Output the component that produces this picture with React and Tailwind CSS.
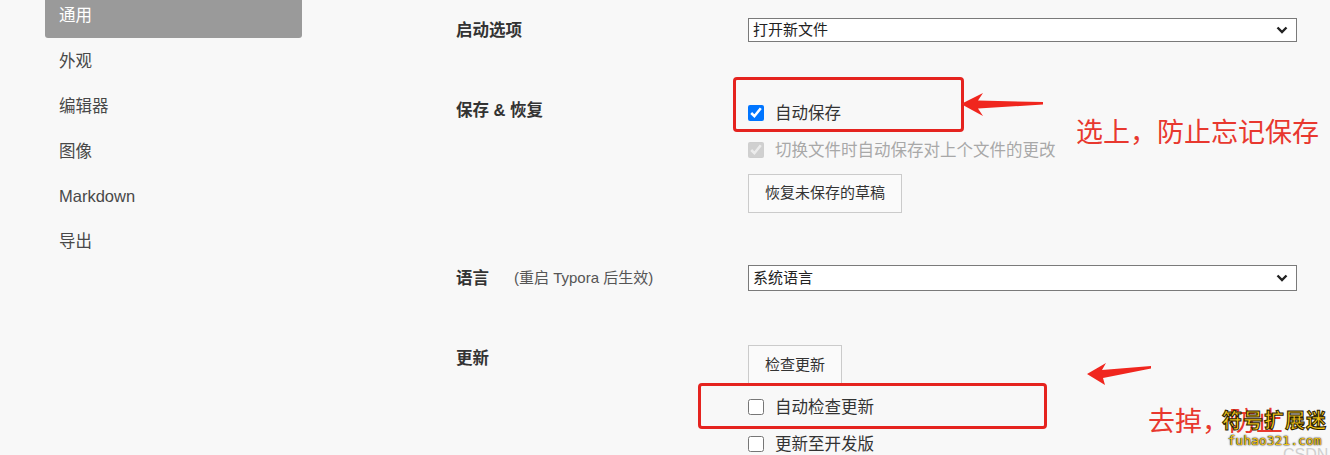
import React from "react";

const navItems = ["外观", "编辑器", "图像", "Markdown", "导出"];

function Chevron() {
  return (
    <svg width="12" height="8" viewBox="0 0 12 8" className="absolute right-[8px] top-1/2 -translate-y-1/2">
      <polyline points="1.5,1.5 6,6 10.5,1.5" fill="none" stroke="#222" strokeWidth="2.4" />
    </svg>
  );
}

function Select({ value, h }) {
  return (
    <div className={`relative w-[549px] ${h} bg-white border border-[#7a7a7a] flex items-center pl-[4px] text-[15px] text-[#222]`}>
      {value}
      <Chevron />
    </div>
  );
}

function Check({ checked, disabled, children }) {
  return (
    <label className={`flex items-center h-[22px] gap-[11px] text-[16.5px] leading-[22px] ${disabled ? "text-[#a8a8a8]" : "text-[#333]"}`}>
      <input
        type="checkbox"
        defaultChecked={checked}
        disabled={disabled}
        className="w-4 h-4 m-0 accent-[#0075ff]"
      />
      {children}
    </label>
  );
}

function Button({ children, h }) {
  return (
    <button className={`${h} px-[16px] bg-[#fafafa] border border-[#cbcbcb] text-[15px] text-[#333] self-start`}>
      {children}
    </button>
  );
}

export default function App() {
  return (
    <div className="relative w-[1330px] h-[455px] overflow-hidden bg-[#f8f8f8] flex font-['Liberation_Sans','Noto_Sans_CJK_SC',sans-serif]">
      {/* sidebar */}
      <div className="w-[302px] pl-[45px] shrink-0">
        <div className="w-[257px] h-[38px] bg-[#9a9a9a] rounded-b-[3px] pl-[14px] pt-[4px] text-white text-[16.5px] leading-[22px]">
          通用
        </div>
        <div className="mt-[1px]">
          {navItems.map((item) => (
            <div key={item} className="h-[45px] flex items-center pl-[14px] text-[16.5px] text-[#484848]">
              {item}
            </div>
          ))}
        </div>
      </div>

      {/* settings */}
      <div className="pl-[154px] pt-[18px] flex flex-col">
        <div className="grid grid-cols-[292px_549px] items-center">
          <div className="text-[16.5px] font-semibold text-[#333] leading-[22px]">启动选项</div>
          <Select value="打开新文件" h="h-[24px]" />
        </div>

        <div className="grid grid-cols-[292px_549px] mt-[57px]">
          <div className="text-[16.5px] font-semibold text-[#333] leading-[22px]">保存 &amp; 恢复</div>
          <div className="flex flex-col pt-[3px]">
            <Check checked>自动保存</Check>
            <div className="mt-[15px]">
              <Check checked disabled>切换文件时自动保存对上个文件的更改</Check>
            </div>
            <div className="mt-[13px] flex">
              <Button h="h-[39px]">恢复未保存的草稿</Button>
            </div>
          </div>
        </div>

        <div className="grid grid-cols-[292px_549px] items-center mt-[52px]">
          <div className="flex items-center leading-[22px]">
            <span className="text-[16.5px] font-semibold text-[#333]">语言</span>
            <span className="ml-[25px] text-[15px] text-[#555]">(重启 Typora 后生效)</span>
          </div>
          <Select value="系统语言" h="h-[26px]" />
        </div>

        <div className="grid grid-cols-[292px_549px] mt-[54px]">
          <div className="pt-[2px] text-[16.5px] font-semibold text-[#333] leading-[22px]">更新</div>
          <div className="flex flex-col">
            <div className="flex">
              <Button h="h-[40px]">检查更新</Button>
            </div>
            <div className="mt-[11px]">
              <Check>自动检查更新</Check>
            </div>
            <div className="mt-[15px]">
              <Check>更新至开发版</Check>
            </div>
          </div>
        </div>
      </div>

      {/* annotations */}
      <div className="absolute left-[733px] top-[77px] w-[231px] h-[55px] border-[3px] border-[#e5231f] rounded-[4px]" />
      <div className="absolute left-[698px] top-[383px] w-[349px] h-[46px] border-[3px] border-[#e5231f] rounded-[4px]" />
      <svg className="absolute left-0 top-0 pointer-events-none" width="1330" height="455">
        <polygon points="961,104 983,93 978,100.5 1043,102 1043,104.5 978,108.5 983,116" fill="#f0261e" />
        <polygon points="1087,374 1106,363 1102,370 1151,366 1151,368.5 1103,378 1105,385" fill="#f0261e" />
      </svg>
      <div className="absolute left-[1076px] top-[113px] text-[27px] leading-[36px] text-[#e8382f] font-['Noto_Sans_CJK_SC',sans-serif]">选上，防止忘记保存</div>
      <div className="absolute left-[1148px] top-[402px] text-[27px] leading-[36px] text-[#e8382f] font-['Noto_Sans_CJK_SC',sans-serif]">去掉，防止</div>
      <div className="absolute left-[1222px] top-[409px] flex flex-col items-center">
        <div className="text-[20px] leading-[24px] font-bold tracking-[1px] text-[#f5c518] [-webkit-text-stroke:1px_#2a2000]">符号扩展迷</div>
        <div className="text-[13px] leading-[15px] font-['DejaVu_Sans_Mono',monospace] text-[#f5c518] [text-shadow:0_0_2px_#000,0_0_1px_#000]">fuhao321.com</div>
      </div>
      <div className="absolute left-[1283px] top-[446px] text-[16px] leading-[18px] text-[#cfcfcf]">CSDN</div>
    </div>
  );
}
